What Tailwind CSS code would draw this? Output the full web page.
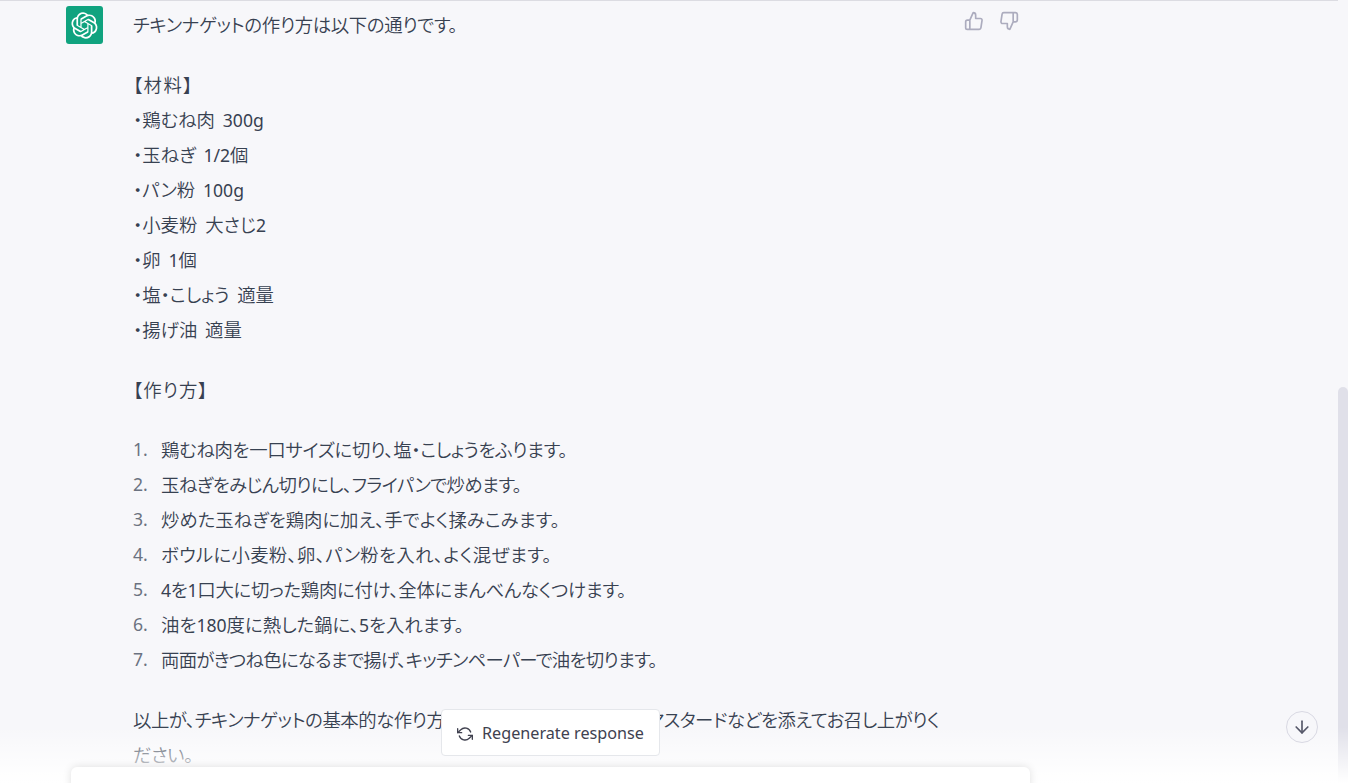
<!DOCTYPE html>
<html lang="ja">
<head>
  <meta charset="UTF-8">
  <meta name="viewport" content="width=device-width, initial-scale=1.0">
  <title>ChatGPT</title>
  <script src="https://cdn.jsdelivr.net/npm/@tailwindcss/browser@4"></script>
</head>
<body class="h-screen overflow-hidden bg-[#f7f7fa] font-['Noto_Sans','Noto_Sans_CJK_JP',sans-serif] text-[#374151]">
  <div class="relative flex h-full">
    <!-- chat column -->
    <main class="h-full flex-1 border-t border-[#dcdce2] overflow-hidden">
      <div class="flex pl-[66px] pt-[5px]">
        <div class="flex h-[38px] w-[37px] shrink-0 items-center justify-center rounded-[3px] bg-[#10a37f]">
          <svg class="h-[27px] w-[27px]" viewBox="0 0 41 41" fill="#fff"><path d="M37.5324 16.8707C37.9808 15.5241 38.1363 14.0974 37.9886 12.6859C37.8409 11.2744 37.3934 9.91076 36.676 8.68622C35.6126 6.83404 33.9882 5.3676 32.0373 4.4985C30.0864 3.62941 27.9098 3.40259 25.8215 3.85078C24.8796 2.7893 23.7219 1.94125 22.4257 1.36341C21.1295 0.785575 19.7249 0.491269 18.3058 0.500197C16.1708 0.495044 14.0893 1.16803 12.3614 2.42214C10.6335 3.67624 9.34853 5.44666 8.6917 7.47815C7.30085 7.76286 5.98686 8.3414 4.8377 9.17505C3.68854 10.0087 2.73073 11.0782 2.02839 12.312C0.956464 14.1591 0.498905 16.2988 0.721698 18.4228C0.944492 20.5467 1.83612 22.5449 3.268 24.1293C2.81966 25.4759 2.66413 26.9026 2.81182 28.3141C2.95951 29.7256 3.40701 31.0892 4.12437 32.3138C5.18791 34.1659 6.8123 35.6322 8.76321 36.5013C10.7141 37.3704 12.8907 37.5973 14.9789 37.1492C15.9208 38.2107 17.0786 39.0587 18.3747 39.6366C19.6709 40.2144 21.0755 40.5087 22.4946 40.4998C24.6307 40.5054 26.7133 39.8321 28.4418 38.5772C30.1704 37.3223 31.4556 35.5506 32.1119 33.5179C33.5027 33.2332 34.8167 32.6547 35.9659 31.821C37.115 30.9874 38.0728 29.9178 38.7752 28.684C39.8458 26.8371 40.3023 24.6979 40.0789 22.5748C39.8556 20.4517 38.9639 18.4544 37.5324 16.8707ZM22.4978 37.8849C20.7443 37.8874 19.0459 37.2733 17.6994 36.1501C17.7601 36.117 17.8666 36.0586 17.936 36.0161L25.9004 31.4156C26.1003 31.3019 26.2663 31.137 26.3813 30.9378C26.4964 30.7386 26.5563 30.5124 26.5549 30.2825V19.0542L29.9213 20.998C29.9389 21.0068 29.9541 21.0198 29.9656 21.0359C29.977 21.052 29.9842 21.0707 29.9867 21.0902V30.3889C29.9842 32.375 29.1946 34.2791 27.7909 35.6841C26.3872 37.0892 24.4838 37.8806 22.4978 37.8849ZM6.39227 31.0064C5.51397 29.4888 5.19742 27.7107 5.49804 25.9832C5.55718 26.0187 5.66048 26.0818 5.73461 26.1244L13.699 30.7248C13.8975 30.8408 14.1233 30.902 14.3532 30.902C14.583 30.902 14.8088 30.8408 15.0073 30.7248L24.731 25.1103V28.9979C24.7321 29.0177 24.7283 29.0376 24.7199 29.0556C24.7115 29.0736 24.6988 29.0893 24.6829 29.1012L16.6317 33.7497C14.9096 34.7416 12.8643 35.0097 10.9447 34.4954C9.02506 33.9811 7.38785 32.7263 6.39227 31.0064ZM4.29707 13.6194C5.17156 12.0998 6.55279 10.9364 8.19885 10.3327C8.19885 10.4013 8.19491 10.5228 8.19491 10.6071V19.808C8.19351 20.0378 8.25334 20.2638 8.36823 20.4629C8.48312 20.6619 8.64893 20.8267 8.84863 20.9404L18.5723 26.5542L15.206 28.4979C15.1894 28.5089 15.1703 28.5155 15.1505 28.5173C15.1307 28.5191 15.1107 28.516 15.0924 28.5082L7.04046 23.8557C5.32135 22.8601 4.06716 21.2235 3.55289 19.3046C3.03862 17.3858 3.30624 15.3413 4.29707 13.6194ZM31.955 20.0556L22.2312 14.4411L25.5976 12.4981C25.6142 12.4872 25.6333 12.4805 25.6531 12.4787C25.6729 12.4769 25.6928 12.4801 25.7111 12.4879L33.7631 17.1364C34.9967 17.849 36.0017 18.8982 36.6606 20.1613C37.3194 21.4244 37.6047 22.849 37.4832 24.2684C37.3617 25.6878 36.8382 27.0432 35.9743 28.1759C35.1103 29.3086 33.9415 30.1717 32.6047 30.6641C32.6047 30.5947 32.6047 30.4733 32.6047 30.3889V21.188C32.6066 20.9586 32.5474 20.7328 32.4332 20.5338C32.319 20.3348 32.154 20.1698 31.955 20.0556ZM35.3055 15.0128C35.2464 14.9765 35.1431 14.9142 35.069 14.8717L27.1045 10.2712C26.906 10.1554 26.6803 10.0943 26.4504 10.0943C26.2206 10.0943 25.9948 10.1554 25.7963 10.2712L16.0726 15.8858V11.9982C16.0715 11.9783 16.0753 11.9585 16.0837 11.9405C16.0921 11.9225 16.1048 11.9068 16.1207 11.8949L24.1719 7.25025C25.4053 6.53903 26.8158 6.19376 28.2383 6.25482C29.6608 6.31589 31.0364 6.78077 32.2044 7.59508C33.3723 8.40939 34.2842 9.53945 34.8334 10.8531C35.3826 12.1667 35.5464 13.6095 35.3055 15.0128ZM14.2424 21.9419L10.8752 19.9981C10.8576 19.9893 10.8423 19.9763 10.8309 19.9602C10.8195 19.9441 10.8122 19.9254 10.8098 19.9058V10.6071C10.8107 9.18295 11.2173 7.78848 11.9819 6.58696C12.7466 5.38544 13.8377 4.42659 15.1275 3.82264C16.4173 3.21869 17.8524 2.99464 19.2649 3.1767C20.6775 3.35876 22.0089 3.93941 23.1034 4.85067C23.0427 4.88379 22.937 4.94215 22.8668 4.98473L14.9024 9.58517C14.7025 9.69878 14.5366 9.86356 14.4215 10.0626C14.3065 10.2616 14.2466 10.4877 14.2479 10.7175L14.2424 21.9419ZM16.071 17.9991L20.4018 15.4978L24.7325 17.9975V22.9985L20.4018 25.4983L16.071 22.9985V17.9991Z"/></svg>
        </div>
        <div class="ml-[30px] w-[815px] shrink-0 pt-[1px] text-[18.4px] leading-[35px] font-[350] [font-feature-settings:'palt']">
          <p class="tracking-[-0.35px]">チキンナゲットの作り方は以下の通りです。</p>
          <p class="mt-[25px] [word-spacing:3px]"><span class="tracking-[1.4px]">【材料】</span><br>・鶏むね肉 <span class="text-[17.6px] leading-none font-normal">300g</span><br>・玉ねぎ <span class="text-[17.6px] leading-none font-normal">1/2</span>個<br>・パン粉 <span class="text-[17.6px] leading-none font-normal">100g</span><br>・小麦粉 大さじ<span class="text-[17.6px] leading-none font-normal">2</span><br>・卵 <span class="text-[17.6px] leading-none font-normal">1</span>個<br>・塩・こしょう 適量<br>・揚げ油 適量</p>
          <p class="mt-[25px] tracking-[1px]">【作り方】</p>
          <ol class="mt-[25px] list-none">
            <li class="flex tracking-[-0.3px]"><span class="w-[28px] shrink-0 text-[17.6px] font-normal tracking-normal text-[#6b7280]">1.</span>鶏むね肉を一口サイズに切り、塩・こしょうをふります。</li>
            <li class="flex tracking-[-0.6px]"><span class="w-[28px] shrink-0 text-[17.6px] font-normal tracking-normal text-[#6b7280]">2.</span>玉ねぎをみじん切りにし、フライパンで炒めます。</li>
            <li class="flex"><span class="w-[28px] shrink-0 text-[17.6px] font-normal text-[#6b7280]">3.</span>炒めた玉ねぎを鶏肉に加え、手でよく揉みこみます。</li>
            <li class="flex tracking-[0.3px]"><span class="w-[28px] shrink-0 text-[17.6px] font-normal tracking-normal text-[#6b7280]">4.</span>ボウルに小麦粉、卵、パン粉を入れ、よく混ぜます。</li>
            <li class="flex tracking-[-0.27px]"><span class="w-[28px] shrink-0 text-[17.6px] font-normal tracking-normal text-[#6b7280]">5.</span><span><span class="text-[17.6px] leading-none font-normal">4</span>を<span class="text-[17.6px] leading-none font-normal">1</span>口大に切った鶏肉に付け、全体にまんべんなくつけます。</span></li>
            <li class="flex"><span class="w-[28px] shrink-0 text-[17.6px] font-normal text-[#6b7280]">6.</span><span>油を<span class="text-[17.6px] leading-none font-normal">180</span>度に熱した鍋に、<span class="text-[17.6px] leading-none font-normal">5</span>を入れます。</span></li>
            <li class="flex tracking-[-0.74px]"><span class="w-[28px] shrink-0 text-[17.6px] font-normal tracking-normal text-[#6b7280]">7.</span>両面がきつね色になるまで揚げ、キッチンペーパーで油を切ります。</li>
          </ol>
          <p class="mt-[25px] w-[815px] tracking-[-0.48px]">以上が、チキンナゲットの基本的な作り方です。お好みでケチャップやマスタードなどを添えてお召し上がりください。</p>
        </div>
        <div class="ml-[16px] flex gap-[15px] pt-[5px] text-[#acacbe]">
          <svg class="h-5 w-5" viewBox="0 0 24 24" fill="none" stroke="currentColor" stroke-width="2" stroke-linecap="round" stroke-linejoin="round"><path d="M14 9V5a3 3 0 0 0-3-3l-4 9v11h11.28a2 2 0 0 0 2-1.7l1.38-9a2 2 0 0 0-2-2.3zM7 22H4a2 2 0 0 1-2-2v-7a2 2 0 0 1 2-2h3"/></svg>
          <svg class="h-5 w-5" viewBox="0 0 24 24" fill="none" stroke="currentColor" stroke-width="2" stroke-linecap="round" stroke-linejoin="round"><path d="M10 15v4a3 3 0 0 0 3 3l4-9V2H5.72a2 2 0 0 0-2 1.7l-1.38 9a2 2 0 0 0 2 2.3zm7-13h2.67A2.31 2.31 0 0 1 22 4v7a2.31 2.31 0 0 1-2.33 2H17"/></svg>
        </div>
      </div>
    </main>
    <!-- scrollbar -->
    <div class="h-full w-[10px] shrink-0 pt-[387px]">
      <div class="h-full rounded-t-[5px] bg-[#e0e0e9]"></div>
    </div>

    <!-- bottom fade, regenerate and input -->
    <div class="pointer-events-none absolute inset-x-0 bottom-0 h-[56px] bg-gradient-to-b from-white/0 to-white"></div>
    <button class="absolute left-[441px] top-[709px] flex h-[47px] w-[219px] items-center gap-[9px] rounded-[4px] border border-[#e5e7eb] bg-white pl-[15px] pt-[2px] text-[16.2px] text-[#40414f]">
      <svg class="h-[16px] w-[16px]" viewBox="0 0 24 24" fill="none" stroke="currentColor" stroke-width="2" stroke-linecap="round" stroke-linejoin="round"><polyline points="1 4 1 10 7 10"/><polyline points="23 20 23 14 17 14"/><path d="M20.49 9A9 9 0 0 0 5.64 5.64L1 10m22 4l-4.64 4.36A9 9 0 0 1 3.51 15"/></svg>
      Regenerate response
    </button>
    <button class="absolute left-[1286px] top-[711px] flex h-8 w-8 items-center justify-center rounded-full border border-[#d9d9e3] bg-[#f7f7fa] text-[#565869]">
      <svg class="h-5 w-5" viewBox="0 0 24 24" fill="none" stroke="currentColor" stroke-width="2" stroke-linecap="round" stroke-linejoin="round"><line x1="12" y1="5" x2="12" y2="19"/><polyline points="19 12 12 19 5 12"/></svg>
    </button>
    <div class="absolute left-[71px] top-[767px] h-[40px] w-[959px] rounded-[6px] bg-white shadow-[0_0_8px_rgba(0,0,0,0.12)]"></div>
  </div>
</body>
</html>
